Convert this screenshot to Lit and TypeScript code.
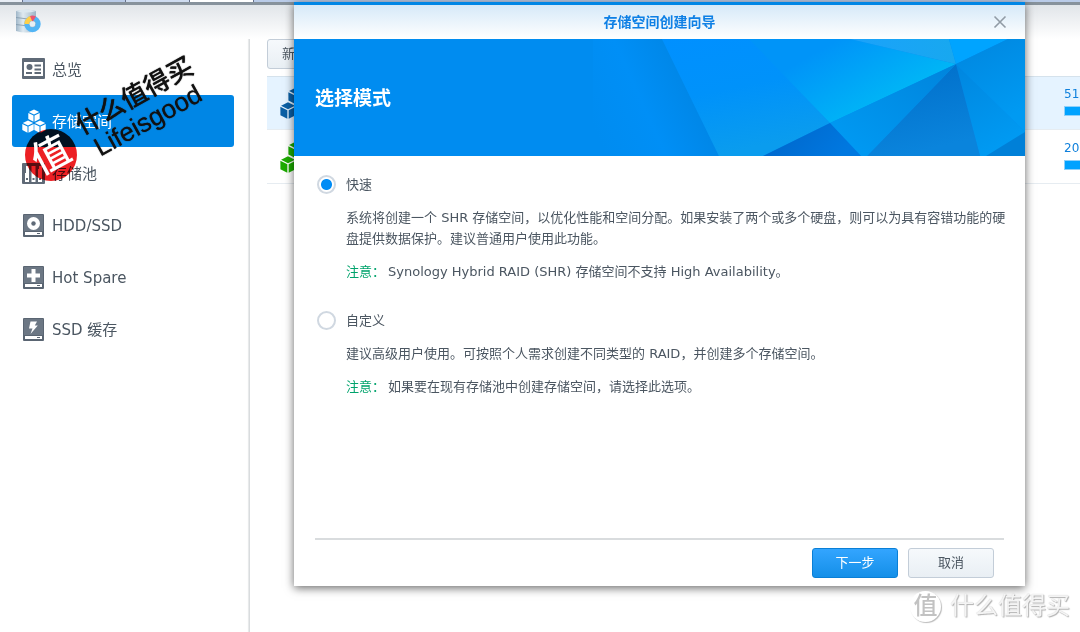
import { LitElement, html, css, svg } from "lit";
import { customElement, property, state } from "lit/decorators.js";

const cube = (cx: number, cy: number) => svg`
  <g transform="translate(${cx} ${cy})">
    <path d="M0-6.2 5.2-3.6 0-1-5.2-3.6Z" />
    <path d="M-5.7-2.7-.5-.1V6.2L-5.7 3.5Z" />
    <path d="M5.7-2.7.5-.1V6.2L5.7 3.5Z" />
  </g>`;

const cubes = svg`${cube(12, 6.6)}${cube(6, 17.6)}${cube(18, 17.6)}`;

const drive = (mark: unknown) => svg`
  <g transform="translate(0 1)">
    <rect x="1" y="0" width="21" height="23" rx="1" fill="#5a6572" />
    <rect x="2" y="1" width="19" height="16" fill="#6c7784" />
    ${mark}
    <rect x="3" y="18" width="17" height="3" fill="#fff" />
    <rect x="15" y="19" width="3" height="1" fill="#5a6572" />
  </g>`;

const icons: Record<string, unknown> = {
  overview: svg`
    <rect x="0" y="1" width="23" height="21" rx="1" fill="#5f6a77" />
    <rect x="2" y="5" width="19" height="14" fill="#fff" />
    <circle cx="7.500" cy="10" r="3" fill="#5f6a77" />
    <path d="M4 15h6v2H4zM12.500 7.500H19v2h-6.500zM12.500 11.500H19v2h-6.500zM12.500 15H19v2h-6.500z" fill="#5f6a77" />`,
  volume: svg`<g fill="#fff">${cubes}</g>`,
  pool: svg`
    <rect x="0" y="2" width="23" height="21" rx="1" fill="#5f6a77" />
    <path d="M3 5h4v16H3zM9.500 5h4v16h-4zM16 5h4v16h-4z" fill="#fff" />
    <path d="M3 5h1v7H3zM16 5h1v3h-1z" fill="#5f6a77" />
    <path d="M4 17h2v2H4zM10.500 17h2v2h-2zM17 17h2v2h-2z" fill="#5f6a77" />`,
  disk: drive(svg`
    <circle cx="11.500" cy="9.500" r="6.500" fill="#fff" />
    <circle cx="11.500" cy="9.500" r="2.200" fill="#5f6a77" />`),
  spare: drive(svg`<path d="M9.500 3h4v4.500H18v4h-4.500V16h-4v-4.500H5v-4h4.500z" fill="#fff" />`),
  cache: drive(svg`<path d="M8.500 3.500H15l-2.200 4h3L8.500 16l2-5.500H7z" fill="#fff" />`),
};

interface NavItem {
  id: string;
  label: string;
}

@customElement("storage-nav")
class StorageNav extends LitElement {
  @property() active = "volume";

  private items: NavItem[] = [
    { id: "overview", label: "总览" },
    { id: "volume", label: "存储空间" },
    { id: "pool", label: "存储池" },
    { id: "disk", label: "HDD/SSD" },
    { id: "spare", label: "Hot Spare" },
    { id: "cache", label: "SSD 缓存" },
  ];

  static styles = css`
    :host {
      display: block;
      flex: none;
      width: 222px;
      padding: 4px 15px 0 12px;
      border-right: 1px solid #d9dcde;
      box-shadow: inset -2px 0 1px -1px #e6e8e9;
    }
    nav {
      display: flex;
      flex-direction: column;
    }
    .item {
      display: flex;
      align-items: center;
      gap: 6px;
      height: 52px;
      padding: 0 10px;
      border-radius: 3px;
      color: #4b5661;
      font-size: 15px;
      text-decoration: none;
    }
    .item.active {
      background: #0086e5;
      color: #fff;
    }
    .icon {
      flex: none;
      width: 24px;
      height: 24px;
    }
    .label {
      padding-top: 2px;
      line-height: 20px;
    }
  `;

  render() {
    return html`<nav>
      ${this.items.map(
        (item) => html`<a
          class="item ${item.id === this.active ? "active" : ""}"
          href="#${item.id}"
          ><svg class="icon" viewBox="0 0 24 24" aria-hidden="true">${icons[item.id]}</svg
          ><span class="label">${item.label}</span></a
        >`
      )}
    </nav>`;
  }
}

@customElement("volume-list")
class VolumeList extends LitElement {
  static styles = css`
    :host {
      display: block;
      flex: 1;
      min-width: 0;
      padding-left: 17px;
    }
    .add {
      display: block;
      box-sizing: border-box;
      height: 30px;
      padding: 0 14px;
      margin-bottom: 7px;
      border: 1px solid #c3cdd8;
      border-radius: 3px;
      background: linear-gradient(#f6f9fc, #e9eff4);
      color: #4b5661;
      font: inherit;
      line-height: 20px;
    }
    .row {
      display: flex;
      justify-content: space-between;
      align-items: center;
      box-sizing: border-box;
      height: 54px;
      padding-left: 13px;
      border-bottom: 1px solid #e6ecf1;
    }
    .row.selected {
      background: #e5f3ff;
      border-top: 1px solid #d5e2ec;
    }
    .icon {
      width: 32px;
      height: 32px;
    }
    .blue {
      fill: #0a5fa5;
    }
    .green {
      fill: #1cab00;
    }
    .usage {
      width: 16px;
      padding-bottom: 4px;
      color: #0f80dc;
      font-size: 12px;
      line-height: 16px;
    }
    .bar {
      height: 8px;
      margin-top: 4px;
      border: 1px solid #8fd0fa;
      border-right: 0;
      background: #00a2ff;
    }
  `;

  private row(tone: string, size: string, selected: boolean) {
    return html`<div class="row ${selected ? "selected" : ""}">
      <svg class="icon ${tone}" viewBox="0 0 24 24" aria-hidden="true">${cubes}</svg>
      <div class="usage">
        ${size}
        <div class="bar"></div>
      </div>
    </div>`;
  }

  render() {
    return html`
      <button class="add" type="button">新增</button>
      ${this.row("blue", "51", true)} ${this.row("green", "20", false)}
    `;
  }
}

@customElement("create-wizard")
class CreateWizard extends LitElement {
  @state() private mode = "quick";

  static styles = css`
    :host {
      display: flex;
      flex-direction: column;
      box-sizing: border-box;
      border-top: 3px solid #0086e5;
      background: #fff;
      box-shadow: 0 2px 9px rgba(0, 0, 0, 0.6);
      color: #4b5661;
    }
    .bar {
      display: grid;
      grid-template-columns: 1fr auto 1fr;
      align-items: center;
      height: 34px;
      padding: 0 18px;
      background: linear-gradient(#d6e9f8, #fff);
    }
    .title {
      grid-column: 2;
      margin: 0;
      color: #0f80e5;
      font-size: 14px;
      font-weight: 700;
      line-height: 20px;
    }
    .close {
      justify-self: end;
      display: flex;
      padding: 0;
      border: 0;
      background: none;
    }
    .close svg {
      width: 14px;
      height: 14px;
    }
    .banner {
      display: grid;
      align-items: center;
      height: 117px;
      background: #008cf0;
      overflow: hidden;
    }
    .art,
    .heading {
      grid-area: 1 / 1;
    }
    .art {
      justify-self: end;
      width: 731px;
      height: 117px;
    }
    .heading {
      z-index: 1;
      margin: 0;
      padding: 0 21px;
      color: #fff;
      font-size: 19px;
      font-weight: 700;
      line-height: 24px;
    }
    .options {
      flex: 1;
      margin: 0;
      padding: 18px 8px 0 23px;
      border: 0;
      min-width: 0;
    }
    .option {
      display: grid;
      grid-template-columns: 19px 1fr;
      column-gap: 10px;
      margin-bottom: 28px;
    }
    .radio {
      appearance: none;
      width: 19px;
      height: 19px;
      margin: 1px 0;
      border: 2px solid #d0d8e1;
      border-radius: 50%;
      background: #fff;
    }
    .radio:checked {
      background: radial-gradient(circle, #008cf5 5px, #fff 6px);
    }
    .label,
    .text {
      line-height: 21px;
    }
    .text {
      grid-column: 2;
      margin: 12px 0 0;
    }
    .note {
      margin-right: 3px;
      color: #00a36c;
    }
    .footer {
      display: flex;
      justify-content: flex-end;
      gap: 10px;
      margin: 0 21px;
      padding: 8px 10px;
      border-top: 2px solid #d9dcde;
    }
    .button {
      box-sizing: border-box;
      width: 86px;
      height: 30px;
      padding: 0;
      border: 1px solid #c3cdd8;
      border-radius: 3px;
      background: linear-gradient(#f6f9fc, #e9eff4);
      color: #4b5661;
      font: inherit;
      line-height: 20px;
    }
    .button.primary {
      border-color: #0a7fd6;
      background: linear-gradient(#33a5ff, #148fe8);
      color: #fff;
    }
  `;

  private art() {
    return html`<svg class="art" viewBox="0 0 731 117" aria-hidden="true">
      <defs>
        <linearGradient id="fold" gradientUnits="userSpaceOnUse" x1="300" y1="90" x2="400" y2="45">
          <stop offset="0" stop-color="#008cf0" />
          <stop offset=".5" stop-color="#008ff6" />
          <stop offset="1" stop-color="#0086e6" />
        </linearGradient>
        <linearGradient id="mid" x1="0" y1="0" x2=".3" y2="1">
          <stop offset="0" stop-color="#0090ff" />
          <stop offset=".5" stop-color="#0092fa" />
          <stop offset="1" stop-color="#0a9cee" />
        </linearGradient>
        <linearGradient id="glow" gradientUnits="userSpaceOnUse" x1="545" y1="0" x2="585" y2="70">
          <stop offset="0" stop-color="#0094f8" />
          <stop offset="1" stop-color="#00b6f6" />
        </linearGradient>
        <linearGradient id="top" x1="0" y1="0" x2="1" y2="0">
          <stop offset="0" stop-color="#1ba2fb" />
          <stop offset="1" stop-color="#18a8ef" />
        </linearGradient>
        <linearGradient id="wing" x1="1" y1="0" x2="0" y2="1">
          <stop offset="0" stop-color="#0084dc" />
          <stop offset="1" stop-color="#009cf5" />
        </linearGradient>
        <linearGradient id="side" x1="0" y1="0" x2=".4" y2="1">
          <stop offset="0" stop-color="#0086df" />
          <stop offset="1" stop-color="#009af2" />
        </linearGradient>
        <linearGradient id="deep" x1="0" y1="0" x2=".3" y2="1">
          <stop offset="0" stop-color="#006dc8" />
          <stop offset="1" stop-color="#0a84dc" />
        </linearGradient>
        <linearGradient id="low" x1="0" y1="0" x2="1" y2=".3">
          <stop offset="0" stop-color="#0064c8" />
          <stop offset="1" stop-color="#0078e0" />
        </linearGradient>
      </defs>
      <path d="M299 0H368L425 117H299Z" fill="url(#fold)" />
      <path d="M368 0H456L536 84 469 117H425Z" fill="url(#mid)" />
      <path d="M455 0H556L662 25 536 84Z" fill="url(#glow)" />
      <path d="M556 0H655L662 25Z" fill="url(#top)" />
      <path d="M655 0H714L662 25Z" fill="#00a4ff" />
      <path d="M714 0H731V93L662 25Z" fill="url(#side)" />
      <path d="M662 25 731 93V117H686Z" fill="url(#side)" />
      <path d="M731 93V117H692Z" fill="#0080d8" />
      <path d="M662 25 686 117H573Z" fill="url(#deep)" />
      <path d="M662 25 573 117H567L536 84Z" fill="url(#wing)" />
      <path d="M536 84 567 117H469Z" fill="url(#low)" />
    </svg>`;
  }

  private radio(value: string, label: string) {
    return html`<input
        class="radio"
        type="radio"
        name="mode"
        id=${value}
        .checked=${this.mode === value}
        @change=${() => (this.mode = value)}
      /><label class="label" for=${value}>${label}</label>`;
  }

  render() {
    return html`
      <header class="bar">
        <h1 class="title">存储空间创建向导</h1>
        <button class="close" type="button" aria-label="关闭">
          <svg viewBox="0 0 14 14"><path d="M1.500 1.500 12.500 12.500M12.500 1.500 1.500 12.500" stroke="#919ba5" stroke-width="1.600" /></svg>
        </button>
      </header>
      <div class="banner">
        ${this.art()}
        <h2 class="heading">选择模式</h2>
      </div>
      <fieldset class="options">
        <div class="option">
          ${this.radio("quick", "快速")}
          <p class="text">
            系统将创建一个 SHR 存储空间，以优化性能和空间分配。如果安装了两个或多个硬盘，则可以为具有容错功能的硬盘提供数据保护。建议普通用户使用此功能。
          </p>
          <p class="text">
            <span class="note">注意：</span>Synology Hybrid RAID (SHR) 存储空间不支持 High Availability。
          </p>
        </div>
        <div class="option">
          ${this.radio("custom", "自定义")}
          <p class="text">建议高级用户使用。可按照个人需求创建不同类型的 RAID，并创建多个存储空间。</p>
          <p class="text">
            <span class="note">注意：</span>如果要在现有存储池中创建存储空间，请选择此选项。
          </p>
        </div>
      </fieldset>
      <footer class="footer">
        <button class="button primary" type="button">下一步</button>
        <button class="button" type="button">取消</button>
      </footer>
    `;
  }
}

@customElement("app-root")
class AppRoot extends LitElement {
  static styles = css`
    :host {
      display: flex;
      flex-direction: column;
      position: relative;
      isolation: isolate;
      min-height: 100vh;
      overflow: hidden;
      background: #fff;
      font-family: "DejaVu Sans", "Noto Sans CJK SC", sans-serif;
      font-size: 13px;
    }
    .tabs {
      display: flex;
      gap: 1px;
      height: 2px;
      background: #66708a;
    }
    .tab {
      flex: 0 0 102px;
      background: #b9cbe8;
    }
    .tab.short {
      flex-basis: 22px;
      background: #e8edf5;
    }
    .tab.next {
      flex-basis: 63px;
      background: #cfdcf0;
    }
    .tab.open {
      flex-basis: 63px;
      background: #fff;
    }
    .tab.rest {
      flex: 1;
    }
    .top {
      height: 34px;
      border-top: 3px solid #87929c;
      padding-left: 16px;
      background: linear-gradient(#e1e5e9, #fff);
    }
    .logo {
      display: block;
      width: 26px;
      height: 26px;
      padding-top: 4px;
    }
    .main {
      display: flex;
      flex: 1;
    }
    .wizard {
      position: absolute;
      top: 2px;
      right: 55px;
      bottom: 46px;
      left: 294px;
    }
    .seal,
    .glyph,
    .stamp,
    .mark {
      position: absolute;
      pointer-events: none;
    }
    .seal {
      top: 129px;
      left: 25px;
      width: 52px;
      height: 52px;
      border-radius: 50%;
      background: #ec2024;
      mix-blend-mode: multiply;
    }
    .glyph {
      top: 129px;
      left: 25px;
      width: 52px;
      color: #fff;
      font-size: 38px;
      font-weight: 500;
      line-height: 52px;
      text-align: center;
      transform: rotate(-28deg);
    }
    .stamp {
      top: 80px;
      left: 76px;
      color: #111;
      font-family: "Liberation Sans", "Noto Sans CJK SC", sans-serif;
      font-size: 26px;
      font-weight: 500;
      line-height: 28px;
      text-align: center;
      text-shadow: 0 0 1px #111;
      white-space: nowrap;
      transform: rotate(-29deg);
    }
    .mark {
      display: flex;
      align-items: center;
      gap: 9px;
      right: 10px;
      bottom: 10px;
      color: #f4f4f4;
      font-size: 24px;
      line-height: 32px;
      text-shadow: 1px 1px 1px #b0b0b0, 0 0 1px #cccccc;
    }
    .ring {
      width: 31px;
      height: 31px;
      border-radius: 50%;
      background: #fff;
      box-shadow: 1px 1px 1px #bbb;
      color: #c2c2c2;
      font-weight: 500;
      line-height: 30px;
      text-align: center;
      text-shadow: none;
    }
  `;

  render() {
    return html`
      <div class="tabs">
        <div class="tab short"></div>
        <div class="tab"></div>
        <div class="tab next"></div>
        <div class="tab open"></div>
        <div class="tab rest"></div>
      </div>
      <header class="top">
        <svg class="logo" viewBox="0 0 26 26" aria-hidden="true">
          <defs>
            <linearGradient id="metal">
              <stop offset="0" stop-color="#9fb6c8" />
              <stop offset=".35" stop-color="#dfeaf1" />
              <stop offset="1" stop-color="#9db4c6" />
            </linearGradient>
          </defs>
          <path d="M0 2Q10-1 20 2V22Q10 25 0 22Z" fill="url(#metal)" />
          <path d="M0 2Q10-1 20 2 10 5 0 2Z" fill="#dce8f0" />
          <path d="M0 8.500Q10 11 20 8.500M0 15.500Q10 18 20 15.500" fill="none" stroke="#7f97a9" stroke-width=".8" />
          <circle cx="16.500" cy="15" r="5.700" fill="none" stroke="#52b5f5" stroke-width="5" />
          <path d="M10.800 15A5.700 5.700 0 0 1 16 9.300" fill="none" stroke="#ffd04a" stroke-width="5" />
          <path d="M14 7 16.500 13 20 7.500Q17 6 14 7Z" fill="#ec5570" />
          <circle cx="16.500" cy="15" r="2.800" fill="#e8eff4" />
        </svg>
      </header>
      <main class="main">
        <storage-nav active="volume"></storage-nav>
        <volume-list></volume-list>
      </main>
      <create-wizard class="wizard"></create-wizard>
      <div class="seal"></div>
      <div class="glyph">值</div>
      <div class="stamp">什么值得买<br />Lifeisgood</div>
      <div class="mark"><span class="ring">值</span>什么值得买</div>
    `;
  }
}
